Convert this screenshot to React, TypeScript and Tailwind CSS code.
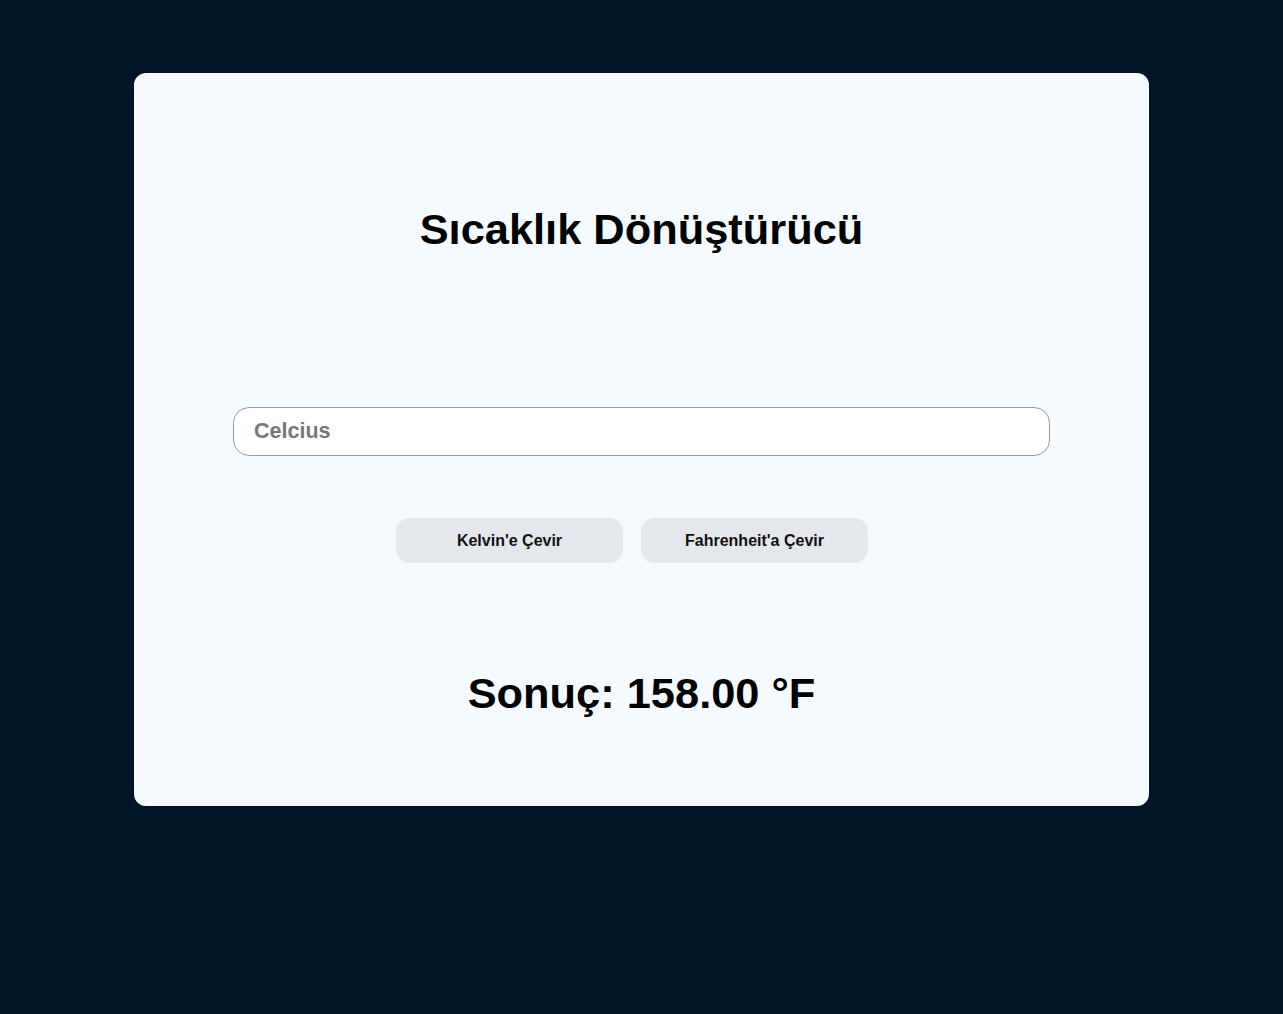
import { useState } from 'react';

export default function App() {
  const [celcius, setCelcius] = useState('');
  const [result, setResult] = useState('Sonuç: 158.00 °F');

  const toKelvin = () => {
    const c = parseFloat(celcius);
    if (!isNaN(c)) setResult(`Sonuç: ${(c + 273.15).toFixed(2)} K`);
  };

  const toFahrenheit = () => {
    const c = parseFloat(celcius);
    if (!isNaN(c)) setResult(`Sonuç: ${((c * 9) / 5 + 32).toFixed(2)} °F`);
  };

  return (
    <div className="min-h-screen w-full bg-[#001628] pt-[73px] font-['Liberation_Sans',Arial,sans-serif]">
      <div className="mx-auto flex w-[1015px] flex-col items-center rounded-xl bg-[#f5faff] pt-[131px] pb-[88px]">
        <h1 className="h-[50px] text-[43.4px] leading-[50px] font-bold text-black">Sıcaklık Dönüştürücü</h1>

        <input
          type="text"
          value={celcius}
          onChange={(e) => setCelcius(e.target.value)}
          placeholder="Celcius"
          className="mt-[153px] h-[49px] w-[817px] rounded-2xl border border-[#9a9a9a] bg-white px-5 text-[21.5px] font-bold text-black outline-none placeholder:text-[#777]"
        />

        <div className="mt-[62px] flex justify-center">
          <button
            onClick={toKelvin}
            className="mr-[18px] h-[45px] w-[227px] rounded-[14px] bg-[#e4e7eb] text-base font-bold text-[#111]"
          >
            Kelvin'e Çevir
          </button>
          <button
            onClick={toFahrenheit}
            className="mr-[19px] h-[45px] w-[227px] rounded-[14px] bg-[#e4e7eb] text-base font-bold text-[#111]"
          >
            Fahrenheit'a Çevir
          </button>
        </div>

        <p className="mt-[105px] h-[50px] text-[43.4px] leading-[50px] font-bold text-black">{result}</p>
      </div>
    </div>
  );
}
